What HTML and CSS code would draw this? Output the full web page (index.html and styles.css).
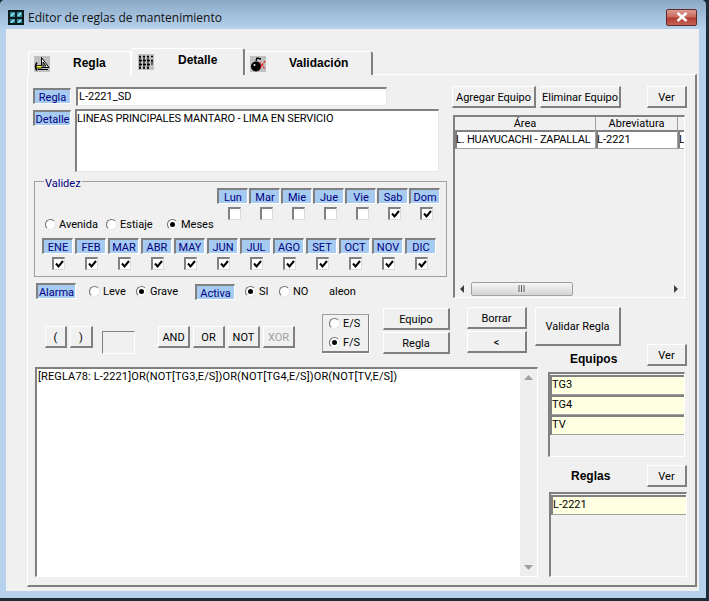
FILE: index.html
```html
<!DOCTYPE html>
<html>
	<head>
		<meta charset="utf-8" />
		<title>Editor de reglas de mantenimiento</title>
		<link rel="stylesheet" href="styles.css">
	</head>
	<body>
		<svg class="defs" width="0" height="0">
			<symbol id="check" viewBox="0 0 9 9"><path d="M1 3.5 L3.5 6.5 L8 1" fill="none" stroke="#000" stroke-width="2"/></symbol>
		</svg>
		<div class="window">
			<div class="titlebar">
				<svg class="app-icon" width="16" height="15" viewBox="0 0 16 15">
					<rect width="16" height="15" fill="#0c1c1c"/>
					<rect x="2" y="2" width="5" height="5" fill="#2f8fa8"/>
					<rect x="9" y="2" width="5" height="5" fill="#2f8fa8"/>
					<rect x="2" y="9" width="5" height="4" fill="#2f8fa8"/>
					<rect x="9" y="9" width="5" height="4" fill="#2f8fa8"/>
					<path d="M3 6 L6 3 M10 6 L13 3 M3 12.500 L6 10 M10 12.500 L13 10" stroke="#a8eef0" stroke-width="1.500"/>
				</svg>
				<span class="title-text">Editor de reglas de mantenimiento</span>
				<div class="close-btn">
					<svg width="14" height="10" viewBox="0 0 14 10"><path d="M2.5 1 L11.5 9 M11.5 1 L2.5 9" stroke="#fff" stroke-width="2.6"/></svg>
				</div>
			</div>
			<div class="client">
				<div class="tabs">
					<div class="tab tab-regla">
						<svg class="tab-icon" width="16" height="16" viewBox="0 0 16 16">
							<rect width="16" height="16" fill="#c0c0c0"/>
							<path d="M7.500 1.500 L15 11.500 H7.500 Z M9 6 V10 H12 Z" fill="#fff" fill-rule="evenodd" stroke="#000" stroke-width="1"/>
							<path d="M2 9.500 H8 V12 H2 Z" fill="#ffff20" stroke="#000" stroke-width="0.800"/>
							<path d="M3 6.500 Q0 10.500 3 14.500" fill="none" stroke="#000" stroke-width="1.500"/>
							<path d="M4 13.500 H14" stroke="#000"/>
						</svg>
						<span>Regla</span>
					</div>
					<div class="tab tab-detalle">
						<svg class="tab-icon" width="16" height="16" viewBox="0 0 16 16">
							<rect width="16" height="16" fill="#c0c0c0"/>
							<path d="M1 2.500H3M5 2.500H7M9 2.500H11M13 2.500H15M1 6.500H4M5 6.500H8M9 6.500H12M13 6.500H15M1 10.500H4M5 10.500H8M9 10.500H12M1 14H3M5 14H7M9 14H11" stroke="#000" stroke-width="1.500"/>
							<path d="M2 2V15M6 2V15M10 2V15M14 6V11" stroke="#000"/>
						</svg>
						<span>Detalle</span>
					</div>
					<div class="tab tab-validacion">
						<svg class="tab-icon" width="16" height="16" viewBox="0 0 16 16">
							<rect width="16" height="16" fill="#c0c0c0"/>
							<circle cx="6" cy="10.500" r="5" fill="#000"/>
							<path d="M6 5 L7 2 L11 3" fill="none" stroke="#000" stroke-width="1.300"/>
							<path d="M9.500 6 L15 13 M15 5 L10 12" stroke="#f01010" stroke-width="1.200" stroke-dasharray="2 1"/>
							<circle cx="4.500" cy="9" r="1" fill="#fff"/>
						</svg>
						<span>Validación</span>
					</div>
				</div>
				<div class="panel">
					<div class="top">
						<div class="top-left">
							<div class="row-regla">
								<span class="lbl lbl-field">Regla</span>
								<div class="input input-regla">L-2221_SD</div>
							</div>
							<div class="row-detalle">
								<span class="lbl lbl-field">Detalle</span>
								<div class="input input-detalle">LINEAS PRINCIPALES MANTARO - LIMA EN SERVICIO</div>
							</div>
							<div class="group">
								<span class="legend">Validez</span>
								<div class="group-top">
									<div class="season">
										<label class="opt w61"><span class="radio"></span>Avenida</label>
										<label class="opt w61"><span class="radio"></span>Estiaje</label>
										<label class="opt"><span class="radio on"></span>Meses</label>
									</div>
									<div class="days">
										<div class="cell"><span class="lbl">Lun</span><span class="check"></span></div>
										<div class="cell"><span class="lbl">Mar</span><span class="check"></span></div>
										<div class="cell"><span class="lbl">Mie</span><span class="check"></span></div>
										<div class="cell"><span class="lbl">Jue</span><span class="check"></span></div>
										<div class="cell"><span class="lbl">Vie</span><span class="check"></span></div>
										<div class="cell"><span class="lbl">Sab</span><span class="check"><svg width="9" height="9"><use href="#check"/></svg></span></div>
										<div class="cell"><span class="lbl">Dom</span><span class="check"><svg width="9" height="9"><use href="#check"/></svg></span></div>
									</div>
								</div>
								<div class="months">
									<div class="cell"><span class="lbl">ENE</span><span class="check"><svg width="9" height="9"><use href="#check"/></svg></span></div>
									<div class="cell"><span class="lbl">FEB</span><span class="check"><svg width="9" height="9"><use href="#check"/></svg></span></div>
									<div class="cell"><span class="lbl">MAR</span><span class="check"><svg width="9" height="9"><use href="#check"/></svg></span></div>
									<div class="cell"><span class="lbl">ABR</span><span class="check"><svg width="9" height="9"><use href="#check"/></svg></span></div>
									<div class="cell"><span class="lbl">MAY</span><span class="check"><svg width="9" height="9"><use href="#check"/></svg></span></div>
									<div class="cell"><span class="lbl">JUN</span><span class="check"><svg width="9" height="9"><use href="#check"/></svg></span></div>
									<div class="cell"><span class="lbl">JUL</span><span class="check"><svg width="9" height="9"><use href="#check"/></svg></span></div>
									<div class="cell"><span class="lbl">AGO</span><span class="check"><svg width="9" height="9"><use href="#check"/></svg></span></div>
									<div class="cell"><span class="lbl">SET</span><span class="check"><svg width="9" height="9"><use href="#check"/></svg></span></div>
									<div class="cell"><span class="lbl">OCT</span><span class="check"><svg width="9" height="9"><use href="#check"/></svg></span></div>
									<div class="cell"><span class="lbl">NOV</span><span class="check"><svg width="9" height="9"><use href="#check"/></svg></span></div>
									<div class="cell"><span class="lbl">DIC</span><span class="check"><svg width="9" height="9"><use href="#check"/></svg></span></div>
								</div>
							</div>
							<div class="row-alarma">
								<span class="lbl lbl-alarma">Alarma</span>
								<label class="opt w47"><span class="radio"></span>Leve</label>
								<label class="opt w59"><span class="radio on"></span>Grave</label>
								<span class="lbl lbl-activa">Activa</span>
								<label class="opt w34"><span class="radio on"></span>SI</label>
								<label class="opt w50"><span class="radio"></span>NO</label>
								<span class="user">aleon</span>
							</div>
						</div>
						<div class="top-right">
							<div class="area-buttons">
								<div class="btn w84">Agregar Equipo</div>
								<div class="btn w81">Eliminar Equipo</div>
								<div class="btn btn-ver ml-ver">Ver</div>
							</div>
							<div class="grid-box">
								<div class="grid-head">
									<span class="col-area">Área</span>
									<span class="col-abr">Abreviatura</span>
									<span class="col-rest"></span>
								</div>
								<div class="grid-row">
									<span class="col-area">L. HUAYUCACHI - ZAPALLAL</span>
									<span class="col-abr">L-2221</span>
									<span class="col-rest">L</span>
								</div>
								<div class="hscroll">
									<svg width="5" height="8" viewBox="0 0 5 8"><path d="M4 0V8L0 4Z" fill="#404040"/></svg>
									<div class="thumb"><svg width="8" height="7" viewBox="0 0 8 7"><path d="M1 0V7M3.500 0V7M6 0V7" stroke="#606060"/></svg></div>
									<svg class="arrow-right" width="5" height="8" viewBox="0 0 5 8"><path d="M1 0V8L5 4Z" fill="#404040"/></svg>
								</div>
							</div>
						</div>
					</div>
					<div class="lower">
						<div class="lower-left">
							<div class="toolbar">
								<div class="btn btn-paren first-paren">(</div>
								<div class="btn btn-paren">)</div>
								<div class="count-box"></div>
								<div class="ops">
									<div class="btn btn-op">AND</div>
									<div class="btn btn-op">OR</div>
									<div class="btn btn-op">NOT</div>
									<div class="btn btn-op disabled">XOR</div>
								</div>
								<div class="es-group">
									<label class="opt"><span class="radio"></span>E/S</label>
									<label class="opt"><span class="radio on"></span>F/S</label>
								</div>
								<div class="stack stack-insert">
									<div class="btn">Equipo</div>
									<div class="btn">Regla</div>
								</div>
								<div class="stack stack-edit">
									<div class="btn">Borrar</div>
									<div class="btn">&lt;</div>
								</div>
							</div>
							<div class="formula">
								<div class="formula-text">[REGLA78: L-2221]OR(NOT[TG3,E/S])OR(NOT[TG4,E/S])OR(NOT[TV,E/S])</div>
								<div class="vscroll">
									<svg width="9" height="5" viewBox="0 0 9 5"><path d="M0 5H9L4.500 0Z" fill="#a0a0a0"/></svg>
									<svg width="9" height="5" viewBox="0 0 9 5"><path d="M0 0H9L4.500 5Z" fill="#a0a0a0"/></svg>
								</div>
							</div>
						</div>
						<div class="side">
							<div class="btn btn-validar">Validar Regla</div>
							<div class="side-head head-equipos">
								<b class="side-title title-equipos">Equipos</b>
								<div class="btn btn-ver">Ver</div>
							</div>
							<div class="list list-equipos">
								<div class="list-row">TG3</div>
								<div class="list-row">TG4</div>
								<div class="list-row">TV</div>
							</div>
							<div class="side-head head-reglas">
								<b class="side-title title-reglas">Reglas</b>
								<div class="btn btn-ver">Ver</div>
							</div>
							<div class="list list-reglas">
								<div class="list-row">L-2221</div>
							</div>
						</div>
					</div>
				</div>
			</div>
		</div>
	</body>
</html>
```

FILE: styles.css
```css
* {
	box-sizing: border-box;
}
body {
	margin: 0;
	font-family: Roboto, "Liberation Sans", Arial, sans-serif;
	font-size: 11px;
	color: #000;
	background: #1d2b38;
}
.defs {
	position: absolute;
}
.window {
	width: 706px;
	height: 598px;
	overflow: hidden;
	background: #b5d1ec;
	border-radius: 5px 5px 0 0;
}

/* title bar */
.titlebar {
	height: 29px;
	display: flex;
	align-items: center;
	padding: 5px 9px 0 8px;
	background: linear-gradient(#8ba9c6, #b5d1ec);
}
.app-icon {
	margin-right: 4px;
}
.title-text {
	font-family: "Open Sans", sans-serif;
	font-size: 12px;
	color: #111;
}
.close-btn {
	margin-left: auto;
	width: 31px;
	height: 17px;
	display: flex;
	align-items: center;
	justify-content: center;
	border: 1px solid #5e2a2a;
	border-radius: 2px;
	background: linear-gradient(#dc9a90 0, #c8685c 48%, #b13a2c 52%, #c4645a 100%);
}
.client {
	margin: 0 7px 0 6px;
	width: 693px;
	height: 562px;
	padding: 19px 0 0 21px;
	background: #f0f0f0;
}

/* tabs */
.tabs {
	display: flex;
	align-items: flex-end;
	height: 27px;
	margin-left: 1px;
}
.tab {
	display: flex;
	height: 24px;
	padding-top: 3px;
	font-family: "Liberation Sans", Arial, sans-serif;
	font-size: 12px;
	font-weight: bold;
	line-height: 16px;
	background: #f0f0f0;
	border-top: 1px solid #fff;
	border-left: 1px solid #fff;
	border-right: 2px solid #808080;
	border-radius: 3px 3px 0 0;
}
.tab-icon {
	flex: none;
	margin-top: 1px;
}
.tab-regla {
	width: 103px;
	padding-left: 5px;
	border-right-color: #fff;
	border-right-width: 1px;
}
.tab-regla span {
	margin-left: 23px;
}
.tab-detalle {
	width: 114px;
	height: 27px;
	padding-left: 6px;
	position: relative;
	z-index: 1;
}
.tab-detalle .tab-icon {
	margin-top: 2px;
}
.tab-detalle span {
	margin-left: 24px;
}
.tab-validacion {
	width: 128px;
	padding-left: 4px;
}
.tab-validacion span {
	margin-left: 23px;
}

/* main panel */
.panel {
	width: 670px;
	height: 513px;
	margin-top: -1px;
	padding: 11px 0 0 6px;
	background: #f0f0f0;
	border: 1px solid #fff;
	border-right: 2px solid #808080;
	border-bottom: 2px solid #808080;
}
.top {
	display: flex;
	height: 221px;
}
.top-left {
	width: 418px;
}
.top-right {
	width: 238px;
}
.lbl {
	display: flex;
	align-items: center;
	justify-content: center;
	width: 31px;
	height: 16px;
	padding-top: 1px;
	flex: none;
	color: #000080;
	background: #a6caf0;
	border-style: solid;
	border-width: 2px 1px 1px 2px;
	border-color: #808080 #fff #fff #808080;
}
.lbl-field {
	width: 38px;
	margin: 1px 5px 0 -1px;
}
.input {
	background: #fff;
	padding-left: 1px;
	border-style: solid;
	border-width: 2px 1px 1px 2px;
	border-color: #808080 #e8e8e8 #e8e8e8 #808080;
}
.row-regla {
	display: flex;
	margin-top: 1px;
}
.input-regla {
	width: 311px;
	height: 19px;
	line-height: 16px;
}
.row-detalle {
	display: flex;
	margin-top: 3px;
}
.row-detalle .lbl-field {
	margin-right: 4px;
}
.input-detalle {
	width: 364px;
	height: 63px;
	line-height: 16px;
	padding-left: 0;
	letter-spacing: -0.13px;
}

/* validez group */
.group {
	position: relative;
	width: 413px;
	height: 96px;
	margin-top: 9px;
	padding: 6px 5px 0 7px;
	border: 1px solid #a0a0a0;
}
.legend {
	position: absolute;
	top: -4px;
	left: 9px;
	padding: 0 1px;
	line-height: 12px;
	color: #000080;
	background: #f0f0f0;
}
.group-top {
	display: flex;
	justify-content: space-between;
	height: 50px;
}
.season {
	display: flex;
	padding: 29px 0 0 3px;
}
.opt {
	display: flex;
	align-items: center;
	gap: 3px;
	height: 14px;
}
.w34 { width: 34px; }
.w47 { width: 47px; }
.w50 { width: 50px; }
.w59 { width: 59px; }
.w61 { width: 61px; }
.w81 { width: 81px; }
.w84 { width: 84px; }
.radio {
	position: relative;
	width: 11px;
	height: 11px;
	flex: none;
	border-radius: 50%;
	background: #fff;
	border: 1px solid;
	border-color: #707070 #e8e8e8 #e8e8e8 #707070;
}
.radio.on::after {
	content: "";
	position: absolute;
	top: 2px;
	left: 2px;
	width: 5px;
	height: 5px;
	border-radius: 50%;
	background: #000;
}
.days {
	display: grid;
	grid-template-columns: repeat(7, 32px);
}
.months {
	display: grid;
	grid-template-columns: repeat(12, 33px);
}
.cell {
	display: flex;
	flex-direction: column;
}
.check {
	display: flex;
	align-items: center;
	justify-content: center;
	width: 13px;
	height: 13px;
	margin: 3px 0 0 11px;
	background: #fff;
	border-style: solid;
	border-width: 2px 1px 1px 2px;
	border-color: #808080 #dcdcdc #dcdcdc #808080;
}
.months .check {
	margin-left: 10px;
}
.days .check svg,
.months .check svg {
	display: block;
}
.row-alarma {
	display: flex;
	align-items: center;
	height: 17px;
	margin-top: 6px;
}
.lbl-alarma {
	width: 40px;
	margin: -1px 13px 0 2px;
}
.lbl-activa {
	width: 40px;
	margin: 1px 10px 0 0;
}
.user {
	margin-top: -1px;
}

/* right column, area list */
.area-buttons {
	display: flex;
	gap: 4px;
}
.btn {
	display: flex;
	align-items: center;
	justify-content: center;
	height: 22px;
	padding-top: 1px;
	background: #f0f0f0;
	border-style: solid;
	border-width: 1px 2px 2px 1px;
	border-color: #fff #808080 #808080 #fff;
}
.btn-ver {
	width: 40px;
	flex: none;
}
.ml-ver {
	margin-left: 22px;
}
.grid-box {
	display: flex;
	flex-direction: column;
	width: 232px;
	height: 183px;
	margin: 7px 0 0 1px;
	overflow: hidden;
	border-style: solid;
	border-width: 2px 1px 1px 2px;
	border-color: #808080 #fff #fff #808080;
}
.grid-head,
.grid-row {
	display: flex;
}
.grid-head {
	height: 13px;
	line-height: 13px;
	text-align: center;
}
.col-area {
	width: 141px;
	flex: none;
	border-right: 1px solid #a0a0a0;
}
.col-abr {
	width: 82px;
	flex: none;
	border-right: 1px solid #a0a0a0;
}
.col-rest {
	flex: 1;
	overflow: hidden;
}
.grid-row {
	height: 19px;
	line-height: 15px;
	white-space: nowrap;
	border-bottom: 1px solid #a0a0a0;
}
.grid-row span {
	background: #fff;
	border-top: 2px solid #808080;
	border-left: 2px solid #808080;
	height: 18px;
	text-indent: -1px;
}
.grid-row .col-area {
	letter-spacing: -0.2px;
}
.hscroll {
	display: flex;
	align-items: center;
	height: 15px;
	margin-top: auto;
	margin-bottom: 1px;
	padding: 0 6px 0 5px;
}
.thumb {
	display: flex;
	align-items: center;
	justify-content: center;
	width: 102px;
	height: 14px;
	margin-left: 6px;
	border: 1px solid #a0a0a0;
	border-radius: 2px;
	background: linear-gradient(#f6f6f6, #d4d4d4);
}
.arrow-right {
	margin-left: auto;
}

/* lower part */
.lower {
	display: flex;
}
.lower-left {
	width: 501px;
}
.toolbar {
	display: flex;
	align-items: flex-start;
	height: 60px;
}
.btn-paren {
	width: 23px;
	margin: 19px 1px 0 0;
}
.first-paren {
	width: 22px;
	margin-left: 11px;
	margin-right: 3px;
}
.count-box {
	width: 33px;
	height: 23px;
	margin: 24px 0 0 8px;
	border-style: solid;
	border-width: 1px;
	border-color: #808080 #fff #fff #808080;
}
.ops {
	display: flex;
	gap: 3px;
	margin: 19px 0 0 23px;
}
.btn-op {
	width: 32px;
}
.disabled {
	color: #a0a0a0;
}
.es-group {
	display: flex;
	flex-direction: column;
	justify-content: center;
	gap: 5px;
	width: 47px;
	height: 39px;
	margin: 7px 0 0 27px;
	padding-left: 6px;
	border-style: solid;
	border-width: 1px 1px 2px 1px;
	border-color: #a0a0a0 #808080 #808080 #a0a0a0;
	box-shadow: 1px 1px 0 #fff;
}
.stack {
	display: flex;
	flex-direction: column;
	gap: 2px;
}
.stack-insert {
	width: 67px;
	margin: 1px 0 0 14px;
}
.stack-edit {
	width: 60px;
	margin-left: 17px;
}
.formula {
	display: flex;
	width: 503px;
	height: 210px;
	margin-left: 1px;
	background: #fff;
	border-style: solid;
	border-width: 2px 1px 1px 2px;
	border-color: #808080 #fff #fff #808080;
}
.formula-text {
	flex: 1;
	padding: 1px 0 0 1px;
	line-height: 14px;
	letter-spacing: 0.13px;
}
.vscroll {
	display: flex;
	flex-direction: column;
	align-items: center;
	justify-content: space-between;
	width: 17px;
	padding: 6px 0 6px;
	background: #eeeeee;
}

/* right column, lists */
.side {
	width: 152px;
}
.btn-validar {
	width: 86px;
	height: 39px;
}
.side-head {
	display: flex;
	height: 22px;
}
.head-equipos {
	margin-top: -2px;
	align-items: flex-end;
}
.head-reglas {
	margin-top: 8px;
	align-items: center;
}
.side-title {
	font-family: "Liberation Sans", Arial, sans-serif;
	font-size: 12px;
	line-height: 14px;
}
.title-equipos {
	margin: 0 0 0 35px;
}
.title-reglas {
	margin-left: 36px;
}
.side-head .btn {
	margin-left: auto;
	align-self: flex-start;
}
.list {
	width: 137px;
	height: 85px;
	margin: 6px 0 0 13px;
	padding-top: 1px;
	overflow: hidden;
	background: #f0f0f0;
	border-style: solid;
	border-width: 2px 1px 1px 2px;
	border-color: #808080 #fff #fff #808080;
}
.list-reglas {
	width: 138px;
	margin-left: 14px;
	margin-top: 5px;
}
.list-row {
	height: 20px;
	line-height: 15px;
	padding-left: 0;
	background: #ffffe1;
	border-style: solid;
	border-width: 2px 0 1px 2px;
	border-color: #808080 #fff #a0a0a0 #808080;
}
```
